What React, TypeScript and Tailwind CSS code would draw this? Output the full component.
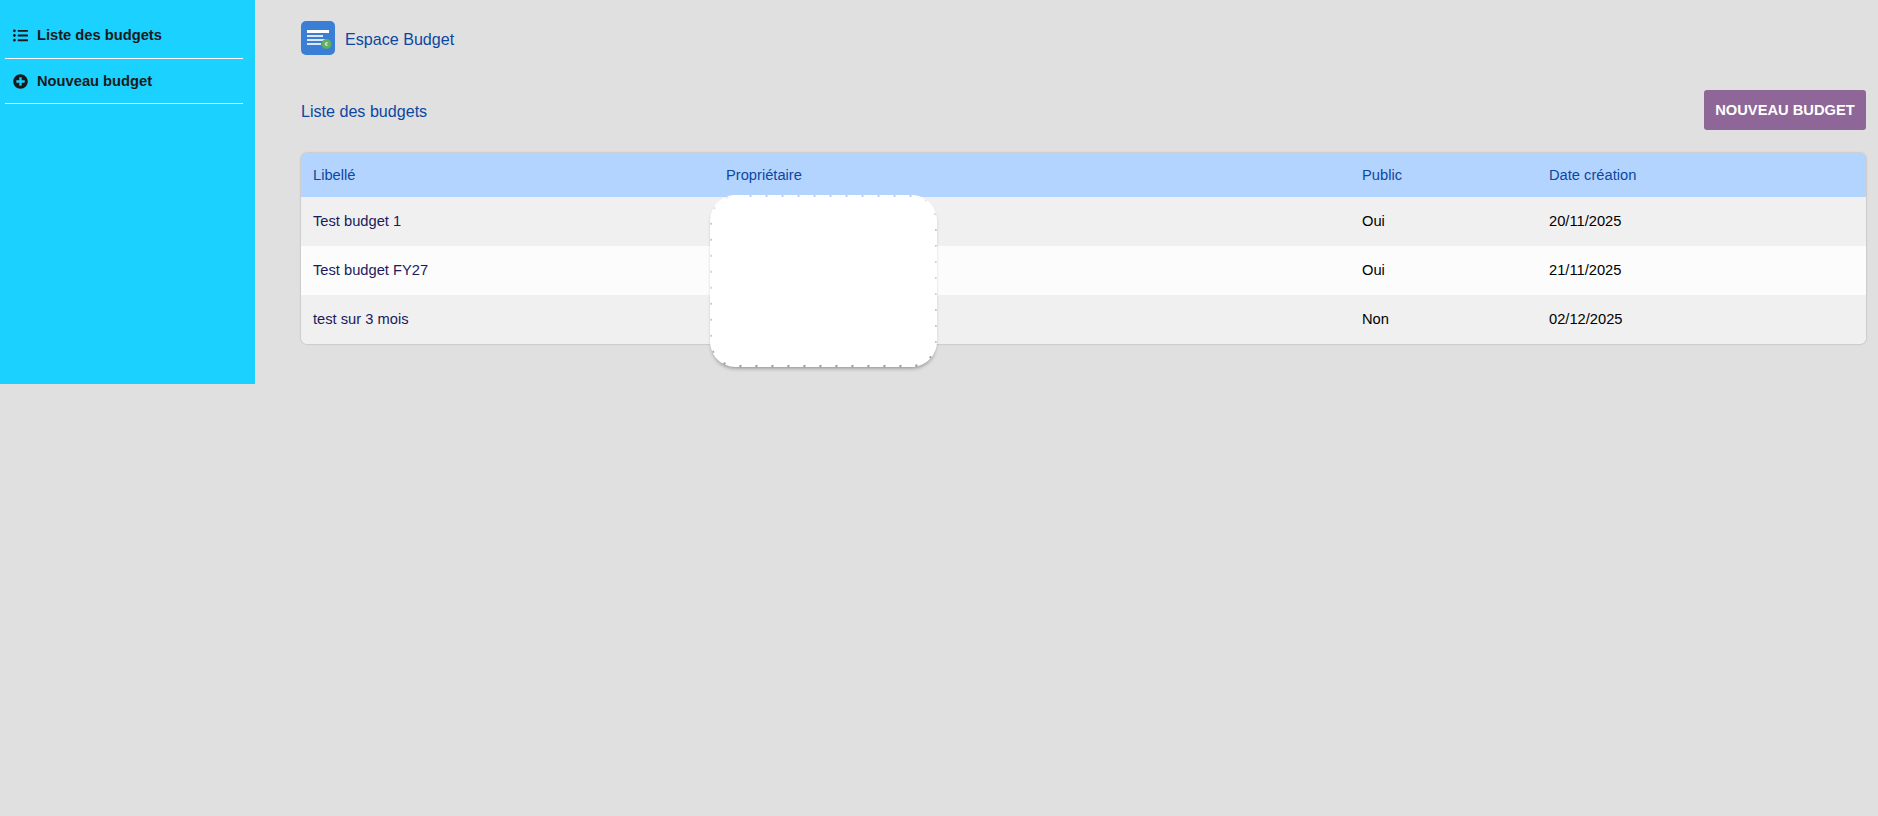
import { FaListUl, FaPlusCircle } from 'react-icons/fa'

const budgets = [
  { label: 'Test budget 1', isPublic: 'Oui', created: '20/11/2025' },
  { label: 'Test budget FY27', isPublic: 'Oui', created: '21/11/2025' },
  { label: 'test sur 3 mois', isPublic: 'Non', created: '02/12/2025' },
]

function BudgetLogo() {
  return (
    <svg viewBox="0 0 34 34" className="w-[34px] h-[34px] shrink-0">
      <rect width="34" height="34" rx="5" fill="#3a7fd5" />
      <rect x="6" y="9" width="22" height="3" fill="#ffffff" />
      <rect x="6" y="14" width="16" height="2" fill="#dbe8f8" />
      <rect x="6" y="18" width="20" height="2" fill="#dbe8f8" />
      <rect x="6" y="22" width="14" height="2" fill="#dbe8f8" />
      <circle cx="25.5" cy="23" r="5" fill="#5cb060" />
      <text x="25.5" y="25" fontSize="6" textAnchor="middle" fill="#e8f5e9" fontFamily="Liberation Sans">€</text>
    </svg>
  )
}

export default function App() {
  return (
    <div className="relative min-h-[816px] bg-[#e0e0e0] flex items-start font-['Liberation_Sans',Arial,sans-serif]">
      {/* Sidebar */}
      <aside className="w-[255px] h-[384px] bg-[#1ad1ff] shrink-0 pl-[5px] pr-[12px] pt-[13px]">
        <div className="h-[46px] border-b border-white flex items-center gap-[9px] pl-[8px] text-[#1a1a1a] font-bold text-[14.7px]">
          <FaListUl className="w-[15px] h-[15px]" />
          <span>Liste des budgets</span>
        </div>
        <div className="h-[45px] border-b border-white flex items-center gap-[9px] pl-[8px] text-[#1a1a1a] font-bold text-[14.7px]">
          <FaPlusCircle className="w-[15px] h-[15px]" />
          <span>Nouveau budget</span>
        </div>
      </aside>

      {/* Main */}
      <main className="flex-1 pl-[46px] pr-[12px] pt-[21px]">
        <div className="flex items-center gap-[10px] h-[34px] text-[#0d47a1] text-[16.1px]">
          <BudgetLogo />
          <span className="pt-[2px]">Espace Budget</span>
        </div>

        <div className="flex items-center justify-between mt-[35px] h-[40px]">
          <h2 className="text-[#0d47a1] text-[16.1px] pt-[3px]">Liste des budgets</h2>
          <button className="w-[162px] h-[40px] bg-[#8e6798] text-white font-bold text-[14.7px] rounded-[3px]">
            NOUVEAU BUDGET
          </button>
        </div>

        <div className="mt-[23px] rounded-[6px] overflow-hidden shadow-[0_0_2px_rgba(0,0,0,0.3)] text-[14.7px]">
          <table className="w-full table-fixed">
            <thead>
              <tr className="h-[44px] bg-[#b3d4ff] text-[#0d47a1] text-left">
                <th className="w-[412px] pl-[12px] font-normal">Libellé</th>
                <th className="w-[637px] pl-[13px] font-normal">Propriétaire</th>
                <th className="w-[186px] pl-[12px] font-normal">Public</th>
                <th className="pl-[13px] font-normal">Date création</th>
              </tr>
            </thead>
            <tbody>
              {budgets.map((b, i) => (
                <tr key={b.label} className={i % 2 === 0 ? 'h-[49px] bg-[#f0f0f0]' : 'h-[49px] bg-[#fcfcfc]'}>
                  <td className="pl-[12px] pb-[1px] text-[#1a1a5e]">{b.label}</td>
                  <td className="pl-[13px] pb-[1px]"></td>
                  <td className="pl-[12px] pb-[1px] text-black">{b.isPublic}</td>
                  <td className="pl-[13px] pb-[1px] text-black">{b.created}</td>
                </tr>
              ))}
            </tbody>
          </table>
        </div>
      </main>

      {/* Masked area over the owner column */}
      <svg viewBox="0 0 235 182" className="absolute left-[706px] top-[191px] w-[235px] h-[182px]">
        <rect x="6" y="6" width="223" height="168" rx="23" fill="#ffffff" className="drop-shadow-[0_3px_2px_rgba(0,0,0,0.4)]" />
        <rect x="5.5" y="5.5" width="224" height="169" rx="24" fill="none" stroke="#ffffff" strokeWidth="3" strokeDasharray="14 2" />
      </svg>
    </div>
  )
}
